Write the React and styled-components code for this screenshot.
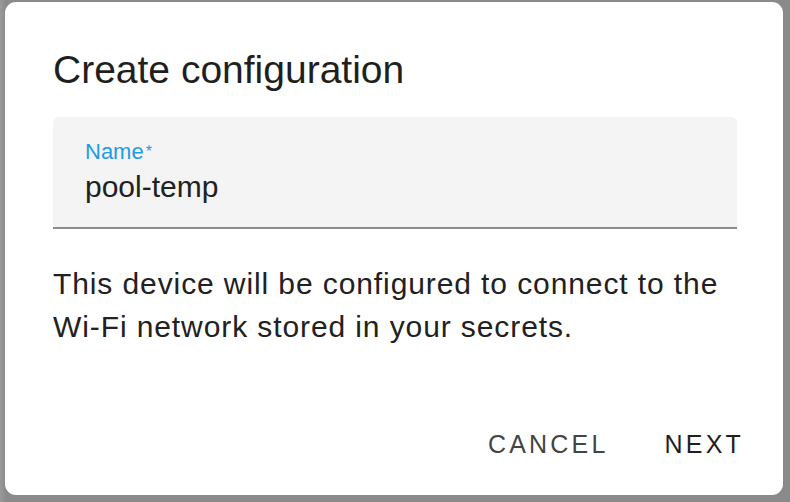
import React from 'react';
import styled, { createGlobalStyle } from 'styled-components';

const GlobalStyle = createGlobalStyle`
    html, body {
        margin: 0;
        padding: 0;
        background: #8a8a8a;
        font-family: "Liberation Sans", Arial, sans-serif;
    }
`;

const Backdrop = styled.div`
    width: 790px;
    height: 502px;
    box-sizing: border-box;
    padding: 2px 7px 7px 5px;
    background: linear-gradient(to right, #9a9a9a 0px, #8a8a8a 6px);
`;

const Dialog = styled.div`
    width: 100%;
    height: 100%;
    box-sizing: border-box;
    background: #fff;
    border-radius: 11px;
    padding: 46px 46px 36px 48px;
    display: flex;
    flex-direction: column;
`;

const Title = styled.h2`
    margin: 0;
    font-size: 39px;
    font-weight: 400;
    line-height: 44px;
    color: #1f1f1f;
`;

const Field = styled.div`
    margin-top: 25px;
    height: 112px;
    box-sizing: border-box;
    background: #f4f4f4;
    border-radius: 6px 6px 0 0;
    border-bottom: 2px solid #8c8c8c;
    padding: 22px 32px 0;
`;

const Label = styled.div`
    font-size: 22px;
    color: #1e9be8;
    line-height: 26px;
    span {
        font-size: 16px;
        vertical-align: top;
        margin-left: 2px;
    }
`;

const Value = styled.div`
    margin-top: 5px;
    font-size: 30px;
    color: #212121;
    line-height: 34px;
`;

const Body = styled.p`
    margin: 33px 0 0;
    font-size: 30px;
    line-height: 43px;
    color: #212121;
    letter-spacing: 0.9px;
`;

const Actions = styled.div`
    margin-top: auto;
    display: flex;
    justify-content: flex-end;
    gap: 56px;
    margin-right: -7px;
`;

const Button = styled.button`
    background: none;
    border: none;
    padding: 0;
    font-family: "Liberation Sans", Arial, sans-serif;
    font-size: 25px;
    line-height: 30px;
    letter-spacing: 3.2px;
    font-weight: 400;
    color: ${(p) => (p.$primary ? '#1f1f1f' : '#444444')};
    text-transform: uppercase;
    cursor: pointer;
`;

export default function App() {
    return (
        <>
            <GlobalStyle />
            <Backdrop>
                <Dialog>
                    <Title>Create configuration</Title>
                    <Field>
                        <Label>
                            Name<span>*</span>
                        </Label>
                        <Value>pool-temp</Value>
                    </Field>
                    <Body>
                        This device will be configured to connect to the Wi-Fi network stored in your
                        secrets.
                    </Body>
                    <Actions>
                        <Button>Cancel</Button>
                        <Button $primary>Next</Button>
                    </Actions>
                </Dialog>
            </Backdrop>
        </>
    );
}
